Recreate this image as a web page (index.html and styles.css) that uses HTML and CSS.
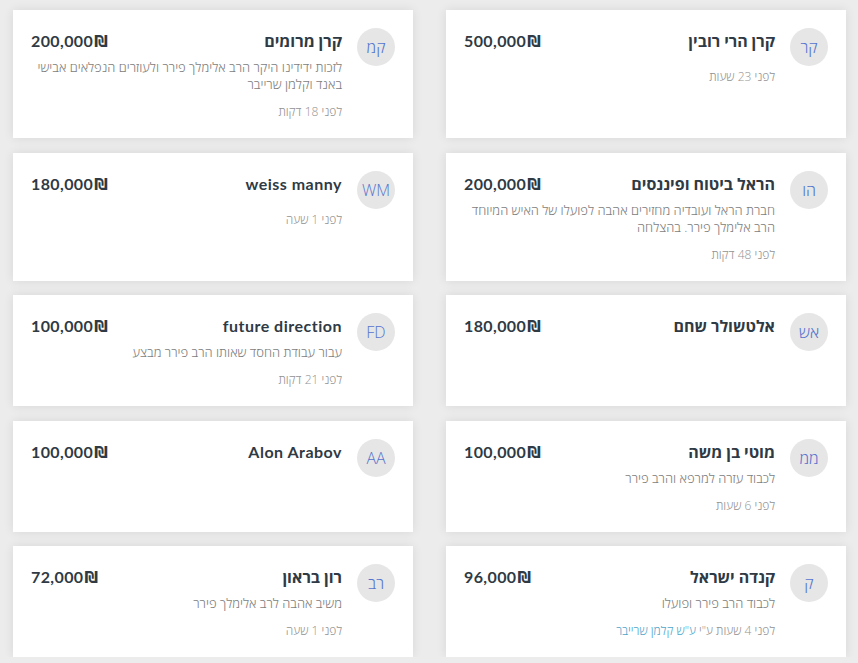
FILE: index.html
```html
<!DOCTYPE html>
<html lang="he" dir="rtl">

<head>
    <meta charset="UTF-8">
    <meta name="viewport" content="width=device-width, initial-scale=1.0">
    <title>תרומות</title>
    <link rel="stylesheet" href="styles.css">
</head>

<body>
    <div class="donations">

        <div class="card">
            <div class="avatar">קר</div>
            <div class="content">
                <div class="head">
                    <div class="title">קרן הרי רובין</div>
                    <div class="amount" dir="ltr">500,000<span class="cur">₪</span></div>
                </div>
                <div class="time">לפני 23 שעות</div>
            </div>
        </div>

        <div class="card">
            <div class="avatar">קמ</div>
            <div class="content">
                <div class="head">
                    <div class="title">קרן מרומים</div>
                    <div class="amount" dir="ltr">200,000<span class="cur">₪</span></div>
                </div>
                <p class="desc">לזכות ידידינו היקר הרב אלימלך פירר ולעוזרים הנפלאים אבישי באנד וקלמן שרייבר</p>
                <div class="time">לפני 18 דקות</div>
            </div>
        </div>

        <div class="card">
            <div class="avatar">הו</div>
            <div class="content">
                <div class="head">
                    <div class="title">הראל ביטוח ופיננסים</div>
                    <div class="amount" dir="ltr">200,000<span class="cur">₪</span></div>
                </div>
                <p class="desc">חברת הראל ועובדיה מחזירים אהבה לפועלו של האיש המיוחד הרב אלימלך פירר. בהצלחה</p>
                <div class="time">לפני 48 דקות</div>
            </div>
        </div>

        <div class="card">
            <div class="avatar">WM</div>
            <div class="content">
                <div class="head">
                    <div class="title latin">weiss manny</div>
                    <div class="amount" dir="ltr">180,000<span class="cur">₪</span></div>
                </div>
                <div class="time">לפני 1 שעה</div>
            </div>
        </div>

        <div class="card">
            <div class="avatar">אש</div>
            <div class="content">
                <div class="head">
                    <div class="title">אלטשולר שחם</div>
                    <div class="amount" dir="ltr">180,000<span class="cur">₪</span></div>
                </div>
            </div>
        </div>

        <div class="card">
            <div class="avatar">FD</div>
            <div class="content">
                <div class="head">
                    <div class="title latin">future direction</div>
                    <div class="amount" dir="ltr">100,000<span class="cur">₪</span></div>
                </div>
                <p class="desc">עבור עבודת החסד שאותו הרב פירר מבצע</p>
                <div class="time">לפני 21 דקות</div>
            </div>
        </div>

        <div class="card">
            <div class="avatar">ממ</div>
            <div class="content">
                <div class="head">
                    <div class="title">מוטי בן משה</div>
                    <div class="amount" dir="ltr">100,000<span class="cur">₪</span></div>
                </div>
                <p class="desc">לכבוד עזרה למרפא והרב פירר</p>
                <div class="time">לפני 6 שעות</div>
            </div>
        </div>

        <div class="card">
            <div class="avatar">AA</div>
            <div class="content">
                <div class="head">
                    <div class="title latin">Alon Arabov</div>
                    <div class="amount" dir="ltr">100,000<span class="cur">₪</span></div>
                </div>
            </div>
        </div>

        <div class="card">
            <div class="avatar">ק</div>
            <div class="content">
                <div class="head">
                    <div class="title">קנדה ישראל</div>
                    <div class="amount" dir="ltr">96,000<span class="cur">₪</span></div>
                </div>
                <p class="desc">לכבוד הרב פירר ופועלו</p>
                <div class="time">לפני 4 שעות ע"י <a href="#">ע"ש קלמן שרייבר</a></div>
            </div>
        </div>

        <div class="card">
            <div class="avatar">רב</div>
            <div class="content">
                <div class="head">
                    <div class="title">רון בראון</div>
                    <div class="amount" dir="ltr">72,000<span class="cur">₪</span></div>
                </div>
                <p class="desc">משיב אהבה לרב אלימלך פירר</p>
                <div class="time">לפני 1 שעה</div>
            </div>
        </div>

    </div>
</body>

</html>
```

FILE: styles.css
```css
body {
    font-family: Lato, "Open Sans", sans-serif;
    background-color: #ececec;
    margin: 0;
    padding: 0;
}

.donations {
    display: grid;
    grid-template-columns: 400px 400px;
    column-gap: 33px;
    row-gap: 14.5px;
    padding: 10px 12px 0 13px;
}

.card {
    display: flex;
    align-items: flex-start;
    gap: 15px;
    background-color: #fff;
    padding: 18px;
    box-shadow: 0 0 10px rgba(0, 0, 0, 0.09);
}

.avatar {
    flex: none;
    width: 38px;
    height: 38px;
    border-radius: 50%;
    background-color: #e6e6e6;
    color: #5574cf;
    font-family: "Open Sans", sans-serif;
    font-weight: 300;
    font-size: 16px;
    display: flex;
    align-items: center;
    justify-content: center;
}

.content {
    flex: 1;
    min-width: 0;
}

.head {
    display: flex;
    justify-content: space-between;
    align-items: baseline;
    height: 26px;
    line-height: 26px;
}

.title {
    font-size: 16px;
    font-weight: 700;
    color: #2f3a44;
}

.title.latin {
    letter-spacing: 0.5px;
}

.amount {
    font-size: 16px;
    font-weight: 700;
    letter-spacing: 0.4px;
    color: #2f3a44;
}

.cur {
    font-family: "DejaVu Sans", sans-serif;
    font-size: 15px;
    line-height: 1;
    margin-left: 1px;
}

.desc {
    margin: 5px 0 0;
    font-family: "Open Sans", sans-serif;
    font-size: 13px;
    font-weight: 300;
    line-height: 17px;
    color: #7d7d7d;
}

.time {
    margin-top: 14px;
    font-family: "Open Sans", sans-serif;
    font-size: 12px;
    font-weight: 300;
    line-height: 17px;
    color: #939393;
}

.desc + .time {
    margin-top: 10px;
}

.time a {
    color: #4ea6cb;
    text-decoration: none;
}
```
